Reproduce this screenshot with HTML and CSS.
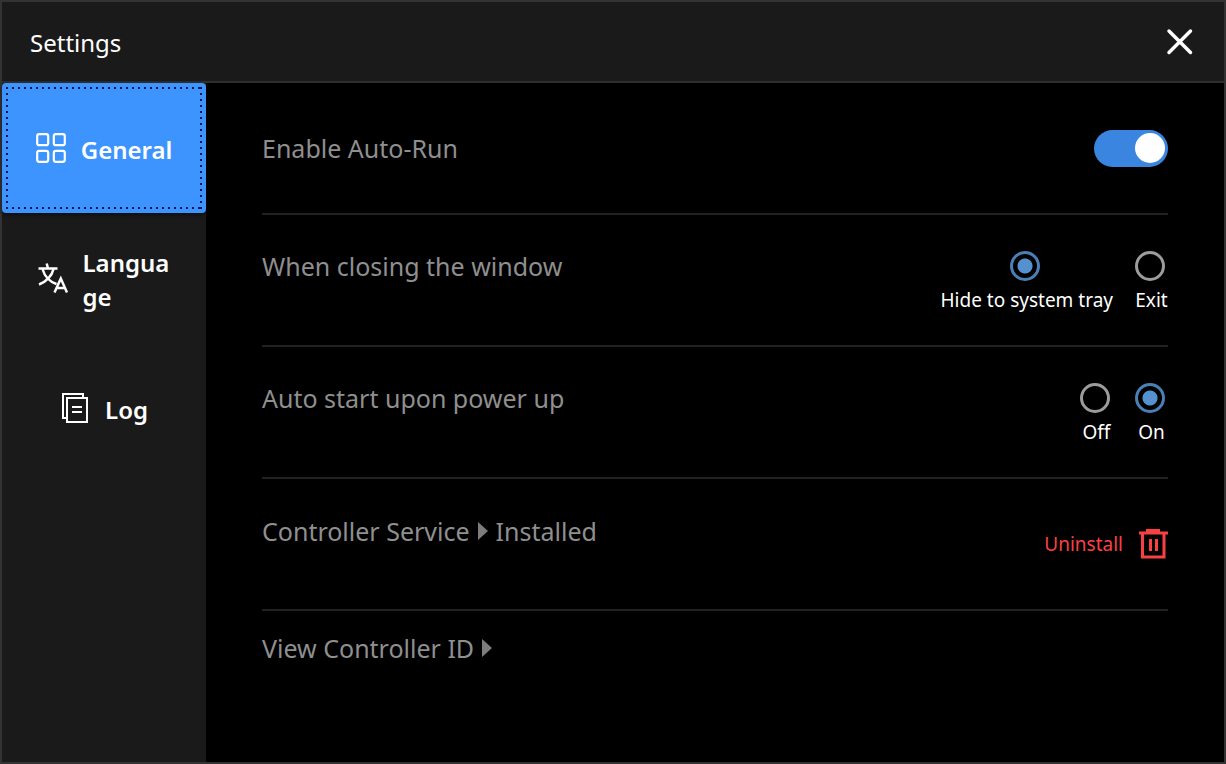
FILE: index.html
```html
<!DOCTYPE html>
<html lang="en">
<head>
    <meta charset="UTF-8">
    <meta name="viewport" content="width=device-width, initial-scale=1.0">
    <title>Settings</title>
    <link rel="stylesheet" href="styles.css">
</head>
<body>
    <div class="window">
        <header class="titlebar">
            <h1>Settings</h1>
            <button type="button" class="close" aria-label="Close">
                <svg width="28" height="28" viewBox="0 0 28 28" fill="none" stroke="#fff" stroke-width="3.5" stroke-linecap="round">
                    <path d="M3 3L24.500 24.500M24.500 3L3 24.500"/>
                </svg>
            </button>
        </header>

        <div class="content">
            <nav class="sidebar">
                <button type="button" class="tab active">
                    <svg width="30" height="30" viewBox="0 0 30 30" fill="none" stroke="#fff" stroke-width="2.2">
                        <rect x="1.200" y="1.200" width="11" height="11" rx="2"/>
                        <rect x="17.800" y="1.200" width="11" height="11" rx="2"/>
                        <rect x="1.200" y="17.800" width="11" height="11" rx="2"/>
                        <rect x="17.800" y="17.800" width="11" height="11" rx="2"/>
                    </svg>
                    <span>General</span>
                </button>
                <button type="button" class="tab">
                    <svg width="30" height="30" viewBox="0 0 30 30" fill="none" stroke="#fff" stroke-width="2.5">
                        <path d="M8.700 .5l1.300 5M.5 5.500h19M15.500 6C14 13 8 19 1 21.500M4.500 6C6.500 13 11 18.500 18.500 21"/>
                        <path d="M16.500 29.500L22.800 15.500L29 29.500M18 25h9.500"/>
                    </svg>
                    <span class="narrow">Language</span>
                </button>
                <button type="button" class="tab">
                    <svg width="30" height="30" viewBox="0 0 30 30" fill="none" stroke="#fff" stroke-width="2">
                        <path d="M23 4V1H3V25H6"/>
                        <rect x="7" y="5" width="20" height="24"/>
                        <path d="M12 14h10M12 19h10"/>
                    </svg>
                    <span>Log</span>
                </button>
            </nav>

            <main class="settings">
                <div class="row">
                    <label class="name" for="autorun">Enable Auto-Run</label>
                    <input type="checkbox" id="autorun" class="switch" checked>
                </div>

                <div class="row" role="radiogroup" aria-labelledby="closing">
                    <span class="name" id="closing">When closing the window</span>
                    <div class="options">
                        <label class="option">
                            <input type="radio" name="closing" checked>
                            Hide to system tray
                        </label>
                        <label class="option">
                            <input type="radio" name="closing">
                            Exit
                        </label>
                    </div>
                </div>

                <div class="row" role="radiogroup" aria-labelledby="autostart">
                    <span class="name" id="autostart">Auto start upon power up</span>
                    <div class="options">
                        <label class="option">
                            <input type="radio" name="autostart">
                            Off
                        </label>
                        <label class="option">
                            <input type="radio" name="autostart" checked>
                            On
                        </label>
                    </div>
                </div>

                <div class="row">
                    <div class="name service">
                        Controller Service
                        <svg class="arrow" width="10" height="18" viewBox="0 0 10 18"><path fill="#7d7d7d" d="M0 0L10 9L0 18z"/></svg>
                        Installed
                    </div>
                    <button type="button" class="uninstall">
                        Uninstall
                        <svg width="30" height="30" viewBox="0 0 30 30" fill="none" stroke="#f94144" stroke-width="3">
                            <path d="M8 0h14v4H8z" fill="#f94144" stroke="none"/>
                            <path d="M1 4h29M4.500 4v24h21.500V4"/>
                            <path d="M12.500 10v12M18.500 10v12"/>
                        </svg>
                    </button>
                </div>

                <div class="row">
                    <button type="button" class="name view-id">
                        View Controller ID
                        <svg class="arrow" width="10" height="18" viewBox="0 0 10 18"><path fill="#7d7d7d" d="M0 0L10 9L0 18z"/></svg>
                    </button>
                </div>
            </main>
        </div>
    </div>
</body>
</html>
```

FILE: styles.css
```css
* {
    box-sizing: border-box;
}
body {
    margin: 0;
    background-color: #000;
    color: #fff;
    font-family: "Segoe UI", "Noto Sans", "Open Sans", sans-serif;
}
button {
    padding: 0;
    border: none;
    background: none;
    color: inherit;
    font-family: inherit;
    cursor: pointer;
}
svg {
    display: block;
    flex-shrink: 0;
}
.window {
    display: flex;
    flex-direction: column;
    min-height: 100vh;
    border: 2px solid #333;
}
/* Title bar */
.titlebar {
    display: flex;
    justify-content: space-between;
    align-items: center;
    height: 81px;
    padding: 0 30px 0 28px;
    background-color: #1a1a1a;
    border-bottom: 2px solid #2e2e2e;
}
.titlebar h1 {
    margin: 0;
    padding-top: 2px;
    font-size: 24px;
    font-weight: 400;
}
.content {
    display: flex;
    flex: 1;
}
/* Tabs on the left */
.sidebar {
    width: 204px;
    flex-shrink: 0;
    background-color: #1a1a1a;
}
.tab {
    display: flex;
    justify-content: center;
    align-items: center;
    gap: 15px;
    width: 100%;
    height: 130px;
    padding: 0 28px;
    border: 4px solid transparent;
    font-size: 24px;
    font-weight: 600;
    line-height: 34px;
    text-align: left;
}
.tab span {
    padding-top: 3px;
}
.tab .narrow {
    width: 88px;
    word-break: break-all;
}
/* Dotted focus frame, one gradient per side */
.tab.active {
    --dots-x: repeating-linear-gradient(90deg, #001a4d 0 2px, transparent 2px 6px);
    --dots-y: repeating-linear-gradient(#001a4d 0 2px, transparent 2px 6px);
    border-color: #3d94ff;
    border-radius: 4px;
    background: var(--dots-x) top / 100% 2px, var(--dots-x) bottom / 100% 2px,
        var(--dots-y) left / 2px 100%, var(--dots-y) right / 2px 100%;
    background-repeat: no-repeat;
    background-color: #3d94ff;
    box-shadow: 0 2px 4px rgba(0, 0, 0, 0.5);
}
/* Settings list */
.settings {
    flex: 1;
    padding: 0 56px;
}
.row {
    display: flex;
    justify-content: space-between;
    align-items: center;
    height: 132px;
    border-bottom: 2px solid #222;
}
.row:last-child {
    height: 74px;
    border-bottom: none;
}
.name {
    color: #8f8f8f;
    font-size: 25px;
    line-height: 34px;
}
.row[role="radiogroup"] {
    align-items: flex-start;
    padding-top: 34px;
}
.service,
.view-id {
    display: flex;
    align-items: center;
    gap: 8px;
}
.service {
    padding-bottom: 26px;
}
.switch {
    appearance: none;
    display: flex;
    align-items: center;
    justify-content: flex-end;
    width: 74px;
    height: 37px;
    margin: 0;
    padding: 3px;
    border-radius: 19px;
    background-color: #3a85e0;
}
.switch::before {
    content: "";
    width: 30px;
    height: 30px;
    border-radius: 50%;
    background-color: #fff;
}
.switch:not(:checked) {
    justify-content: flex-start;
    background-color: #555;
}
.options {
    display: flex;
    gap: 22px;
}
.option {
    display: flex;
    flex-direction: column;
    align-items: center;
    gap: 6px;
    min-width: 33px;
    font-size: 19px;
    line-height: 26px;
}
.option input {
    appearance: none;
    width: 30px;
    height: 30px;
    margin: 2px 3px 0 0;
    border: 3px solid #9c9c9c;
    border-radius: 50%;
}
.option input:checked {
    border-color: #4a80b8;
    background: radial-gradient(circle, #5590cf 7px, transparent 8px);
}
.uninstall {
    display: flex;
    align-items: center;
    gap: 15px;
    color: #f94144;
    font-size: 19px;
}
```
